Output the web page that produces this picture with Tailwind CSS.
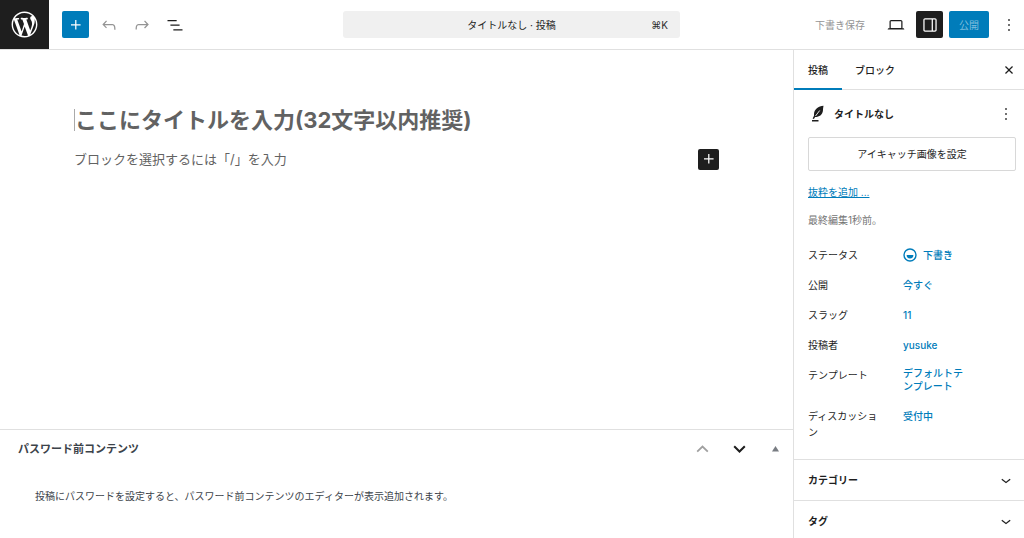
<!DOCTYPE html>
<html lang="ja">
<head>
<meta charset="utf-8">
<title>タイトルなし · 投稿</title>
<script src="https://cdn.jsdelivr.net/npm/@tailwindcss/browser@4"></script>
</head>
<body class="flex h-screen flex-col overflow-hidden bg-white font-['Inter','Noto_Sans_CJK_JP',sans-serif] text-[10px] leading-4 text-[#1e1e1e]">
<header class="flex h-[50px] shrink-0 border-b border-[#e0e0e0]">
  <div class="flex flex-1 items-center gap-[6px]">
    <a href="#" aria-label="投稿一覧を表示" class="mr-[7px] flex h-full w-[49px] items-center justify-center bg-[#1e1e1e] text-white">
      <svg class="size-[31px]" viewBox="-2 -2 24 24" fill="currentColor"><path d="M20 10c0-5.51-4.49-10-10-10C4.48 0 0 4.49 0 10c0 5.52 4.48 10 10 10 5.51 0 10-4.48 10-10zM7.78 15.37L4.37 6.22c.55-.02 1.17-.08 1.17-.08.5-.06.44-1.13-.06-1.11 0 0-1.45.11-2.37.11-.18 0-.37 0-.58-.01C4.12 2.69 6.87 1.11 10 1.11c2.33 0 4.45.87 6.05 2.34-.68-.11-1.65.39-1.65 1.58 0 .74.45 1.36.9 2.1.35.61.55 1.36.55 2.46 0 1.49-1.4 5-1.4 5l-3.03-8.37c.54-.02.82-.17.82-.17.5-.05.44-1.25-.06-1.22 0 0-1.44.12-2.38.12-.87 0-2.33-.12-2.33-.12-.5-.03-.56 1.2-.06 1.22l.92.08 1.26 3.41zM17.41 10c.24-.64.74-1.87.43-4.25.7 1.29 1.05 2.71 1.05 4.25 0 3.29-1.73 6.24-4.4 7.78.97-2.59 1.94-5.2 2.92-7.78zM6.1 18.09C3.12 16.65 1.11 13.53 1.11 10c0-1.3.23-2.48.72-3.59C3.25 10.3 4.67 14.2 6.1 18.09zm4.03-6.63l2.58 6.98c-.86.29-1.76.45-2.71.45-.79 0-1.57-.11-2.29-.33.81-2.38 1.62-4.74 2.42-7.1z"/></svg>
    </a>
    <button aria-label="ブロック挿入ツール" class="flex size-[27px] items-center justify-center rounded-[2px] bg-[#007cba] text-white"><svg class="size-5" viewBox="0 0 24 24" fill="currentColor"><path d="M11 12.5V17.5H12.5V12.5H17.5V11H12.5V6H11V11H6V12.5H11Z"/></svg></button>
    <button aria-label="元に戻す" class="flex size-[27px] items-center justify-center text-[#949494]"><svg class="size-5" viewBox="0 0 24 24" fill="currentColor"><path d="M18.3 11.7c-.6-.6-1.4-.9-2.3-.9H6.7l2.9-3.3-1.1-1-4.5 5L8.5 16l1-1-2.7-2.7H16c.5 0 .9.2 1.3.5 1 1 1 3.4 1 4.5v.3h1.5v-.2c0-1.5 0-4.3-1.5-5.7z"/></svg></button>
    <button aria-label="やり直す" class="flex size-[27px] items-center justify-center text-[#949494]"><svg class="size-5" viewBox="0 0 24 24" fill="currentColor"><path d="M15.6 6.5l-1.1 1 2.9 3.3H8c-.9 0-1.7.3-2.3.9-1.4 1.5-1.4 4.2-1.4 5.6v.2h1.5v-.3c0-1.1 0-3.5 1-4.5.3-.3.7-.5 1.3-.5h9.2L14.5 15l1.1 1.1 4.6-4.6-4.6-5z"/></svg></button>
    <button aria-label="ドキュメント概観" class="flex size-[27px] items-center justify-center"><svg class="size-5" viewBox="0 0 24 24" fill="currentColor"><path d="M3 6h11v1.5H3V6Zm3.5 5.5h11V13h-11v-1.5ZM21 17H10v1.5h11V17Z"/></svg></button>
  </div>
  <div class="flex w-[337px] items-center">
    <button class="grid h-[27px] w-full grid-cols-[1fr_auto_1fr] items-center rounded-[3px] bg-[#f0f0f0] px-3"><span class="col-start-2">タイトルなし · 投稿</span><span class="text-right text-[#2f2f2f]">⌘K</span></button>
  </div>
  <div class="flex flex-1 items-center justify-end gap-[6px] pr-px">
    <button class="mr-[15px] text-[#949494]">下書き保存</button>
    <button aria-label="表示" class="flex h-[27px] w-5 items-center justify-center"><svg class="size-5" viewBox="0 0 24 24" fill="currentColor"><path d="M20.5 16h-.7V8c0-1.1-.9-2-2-2H6.2c-1.1 0-2 .9-2 2v8h-.7c-.8 0-1.5.7-1.5 1.5h20c0-.8-.7-1.5-1.5-1.5zM5.7 8c0-.3.2-.5.5-.5h11.6c.3 0 .5.2.5.5v7.6H5.7V8z"/></svg></button>
    <button aria-label="設定" class="ml-1 flex size-[27px] items-center justify-center rounded-[2px] bg-[#1e1e1e] text-white"><svg class="size-5" viewBox="0 0 24 24" fill="currentColor"><path d="M18 4H6c-1.1 0-2 .9-2 2v12c0 1.1.9 2 2 2h12c1.1 0 2-.9 2-2V6c0-1.1-.9-2-2-2zm-4 14.5H6c-.3 0-.5-.2-.5-.5V6c0-.3.2-.5.5-.5h8v13zm4.5-.5c0 .3-.2.5-.5.5h-2.5v-13H18c.3 0 .5.2.5.5v12z"/></svg></button>
    <button class="h-[27px] rounded-[2px] bg-[#007cba] px-[10px] text-[#7fbedd]">公開</button>
    <button aria-label="オプション" class="flex h-[27px] w-7 items-center justify-center"><svg class="size-5" viewBox="0 0 24 24" fill="currentColor"><path d="M13 19h-2v-2h2v2zm0-6h-2v-2h2v2zm0-6h-2V5h2v2z"/></svg></button>
  </div>
</header>
<div class="flex min-h-0 flex-1">
  <main class="flex min-w-0 flex-1 flex-col">
    <section class="flex flex-1 flex-col gap-[17px] px-[74px] pt-[59px] text-[#626262]">
      <h1 class="border-l border-[#aaa] text-[22px] leading-[22px] font-bold">ここにタイトルを入力(32文字以内推奨)</h1>
      <div class="flex items-center justify-between text-[13px] leading-[22px]"><p>ブロックを選択するには「/」を入力</p>
        <button aria-label="ブロックを追加" class="flex size-[21px] items-center justify-center rounded-[2px] bg-[#1e1e1e] text-white"><svg class="size-5" viewBox="0 0 24 24" fill="currentColor"><path d="M11 12.5V17.5H12.5V12.5H17.5V11H12.5V6H11V11H6V12.5H11Z"/></svg></button></div>
    </section>
    <section class="h-[109px] border-t border-[#e0e0e0] text-[#3c434a]">
      <div class="flex h-[38px] items-center pl-[18px]">
        <h2 class="flex-1 text-[11px] font-bold">パスワード前コンテンツ</h2>
        <button aria-label="上に移動" class="flex w-[37px] justify-center text-[#a0a0a0]"><svg class="w-[13px]" viewBox="0 0 13 8" fill="none" stroke="currentColor" stroke-width="1.8"><path d="M1.2 6.7 6.5 1.5 11.8 6.7"/></svg></button>
        <button aria-label="下に移動" class="flex w-[37px] justify-center text-[#1e1e1e]"><svg class="w-[13px]" viewBox="0 0 13 8" fill="none" stroke="currentColor" stroke-width="2"><path d="M1.2 1.3 6.5 6.5 11.8 1.3"/></svg></button>
        <button aria-label="パネルを切り替え" class="flex w-[35px] justify-center text-[#787c82]"><svg class="w-[7px]" viewBox="0 0 7 6" fill="currentColor"><path d="M0 5.5 3.5 0 7 5.5z"/></svg></button>
      </div>
      <p class="px-[35px] pt-5">投稿にパスワードを設定すると、パスワード前コンテンツのエディターが表示追加されます。</p>
    </section>
  </main>
  <aside class="flex w-[231px] shrink-0 flex-col border-l border-[#e0e0e0]">
    <div class="flex h-10 shrink-0 border-b border-[#e0e0e0]">
      <button class="-mb-px border-b-2 border-[#007cba] px-[14px] pt-px font-medium">投稿</button>
      <button class="px-[13px] font-medium">ブロック</button>
      <button aria-label="設定を閉じる" class="ml-auto flex w-[31px] items-center justify-center"><svg class="size-5" viewBox="0 0 24 24" fill="currentColor"><path d="M12 13.06l3.712 3.713 1.061-1.06L13.061 12l3.712-3.712-1.06-1.06L12 10.938 8.288 7.227l-1.061 1.06L10.939 12l-3.712 3.712 1.06 1.061L12 13.061z"/></svg></button>
    </div>
    <div class="flex flex-1 flex-col pr-2 pl-[14px]">
      <div class="flex h-[47px] items-center gap-[6px]">
        <svg class="size-5" viewBox="0 0 20 20" fill="currentColor"><path d="M15.500 1.800C10.500 2.300 6 5.200 6 10v1.700L4.600 14.500l1.300.6 1.200-2.200c4.400 0 7.200-2.300 7.800-6 .2-1.700.2-3.400.6-5.100z"/><path d="M7.500 12 11.700 6.500" stroke="#fff" stroke-width=".9"/><path d="M4 16h6.500v1.500H4z"/></svg>
        <h2 class="flex-1 font-bold">タイトルなし</h2>
        <button aria-label="操作"><svg class="size-5" viewBox="0 0 24 24" fill="currentColor"><path d="M13 19h-2v-2h2v2zm0-6h-2v-2h2v2zm0-6h-2V5h2v2z"/></svg></button>
      </div>
      <button class="h-[34px] shrink-0 rounded-[2px] border border-[#d8d8d8]">アイキャッチ画像を設定</button>
      <a href="#" class="mt-[13px] self-start text-[#007cba] underline">抜粋を追加 ...</a>
      <p class="mt-3 text-[#757575]">最終編集1秒前。</p>
      <dl class="mt-[19px] grid grid-cols-[75px_70px] gap-x-5 gap-y-[14px]">
        <dt>ステータス</dt><dd><button class="flex items-center gap-[6px] font-medium text-[#007cba]"><svg class="size-[14px]" viewBox="0 0 14 14"><circle cx="7" cy="7" r="6" fill="none" stroke="currentColor" stroke-width="1.4"/><path d="M3.6 7h6.8a3.4 3.4 0 0 1-6.8 0z" fill="currentColor"/></svg>下書き</button></dd>
        <dt>公開</dt><dd><button class="font-medium text-[#007cba]">今すぐ</button></dd>
        <dt>スラッグ</dt><dd><button class="font-medium text-[#007cba]">11</button></dd>
        <dt>投稿者</dt><dd><button class="font-medium text-[#007cba]">yusuke</button></dd>
        <dt>テンプレート</dt><dd><button class="w-[66px] text-left leading-[13px] font-medium text-[#007cba]">デフォルトテンプレート</button></dd>
        <dt>ディスカッション</dt><dd><button class="font-medium text-[#007cba]">受付中</button></dd>
      </dl>
    </div>
    <button class="flex h-[41px] shrink-0 items-center justify-between border-t border-[#e0e0e0] pr-2 pl-[14px] font-bold">カテゴリー<svg class="size-5" viewBox="0 0 24 24" fill="currentColor"><path d="M17.5 11.6L12 16l-5.5-4.4.9-1.2L12 14l4.5-3.6 1 1.2z"/></svg></button>
    <button class="flex h-[38px] shrink-0 items-center justify-between border-t border-[#e0e0e0] pt-[2px] pr-2 pl-[14px] font-bold">タグ<svg class="size-5" viewBox="0 0 24 24" fill="currentColor"><path d="M17.5 11.6L12 16l-5.5-4.4.9-1.2L12 14l4.5-3.6 1 1.2z"/></svg></button>
  </aside>
</div>
</body>
</html>
